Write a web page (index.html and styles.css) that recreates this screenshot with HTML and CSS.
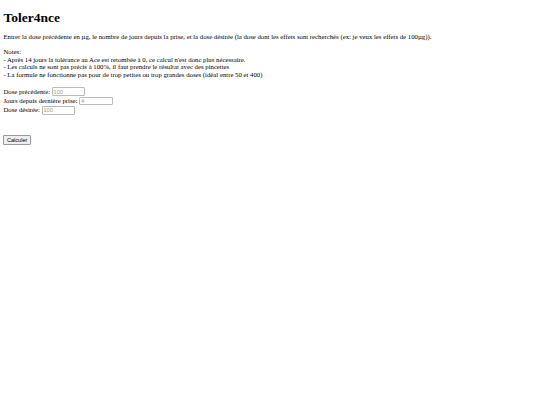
FILE: index.html
```html
<!DOCTYPE html>
<html lang="fr">
<head>
<meta charset="utf-8">
<title>Toler4nce</title>
<link rel="stylesheet" href="styles.css">
</head>
<body>
<h1 class="title">Toler4nce</h1>
<p class="text">Entrer la dose précédente en µg, le nombre de jours depuis la prise, et la dose désirée (la dose dont les effets sont recherchés (ex: je veux les effets de 100µg)).</p>
<p class="text">Notes:<br>
- Après 14 jours la tolérance au Ace est retombée à 0, ce calcul n'est donc plus nécessaire.<br>
- Les calculs ne sont pas précis à 100%, il faut prendre le résultat avec des pincettes<br>
- La formule ne fonctionne pas pour de trop petites ou trop grandes doses (idéal entre 50 et 400)</p>
<form class="form">
<label class="row">Dose précédente: <input class="field" type="text" placeholder="100"></label><br>
<label class="row">Jours depuis dernière prise: <input class="field" type="text" placeholder="4"></label><br>
<label class="row">Dose désirée: <input class="field" type="text" placeholder="100"></label><br>
<br><br>
<button class="btn" type="button">Calculer</button>
</form>
</body>
</html>
```
FILE: styles.css
```css
html { background: #fff; }
body {
  margin: 3.4px;
  font-family: "Liberation Serif", "Times New Roman", serif;
  font-size: 6.75px;
  line-height: 7.6px;
  color: #000;
}
.title {
  font-size: 13.5px;
  line-height: 15.5px;
  font-weight: bold;
  margin: 7px 0;
}
.text {
  margin: 7.4px 0;
}
.form {
  margin: 8px 0 0;
  line-height: 9px;
}
.field {
  font-family: "Liberation Sans", Arial, sans-serif;
  font-size: 5.6px;
  width: 30px;
  height: 6px;
  padding: 0.4px 0.8px;
  border: 1px solid #bbb;
  border-radius: 1px;
  margin: 0;
  vertical-align: baseline;
}
.field::placeholder { color: #999; }
.btn {
  font-family: "Liberation Sans", Arial, sans-serif;
  font-size: 5.6px;
  line-height: 6px;
  padding: 1px 2.5px;
  border: 1px solid #999;
  border-radius: 1px;
  background: #efefef;
  color: #000;
  margin: 2px 0 0;
}
```
